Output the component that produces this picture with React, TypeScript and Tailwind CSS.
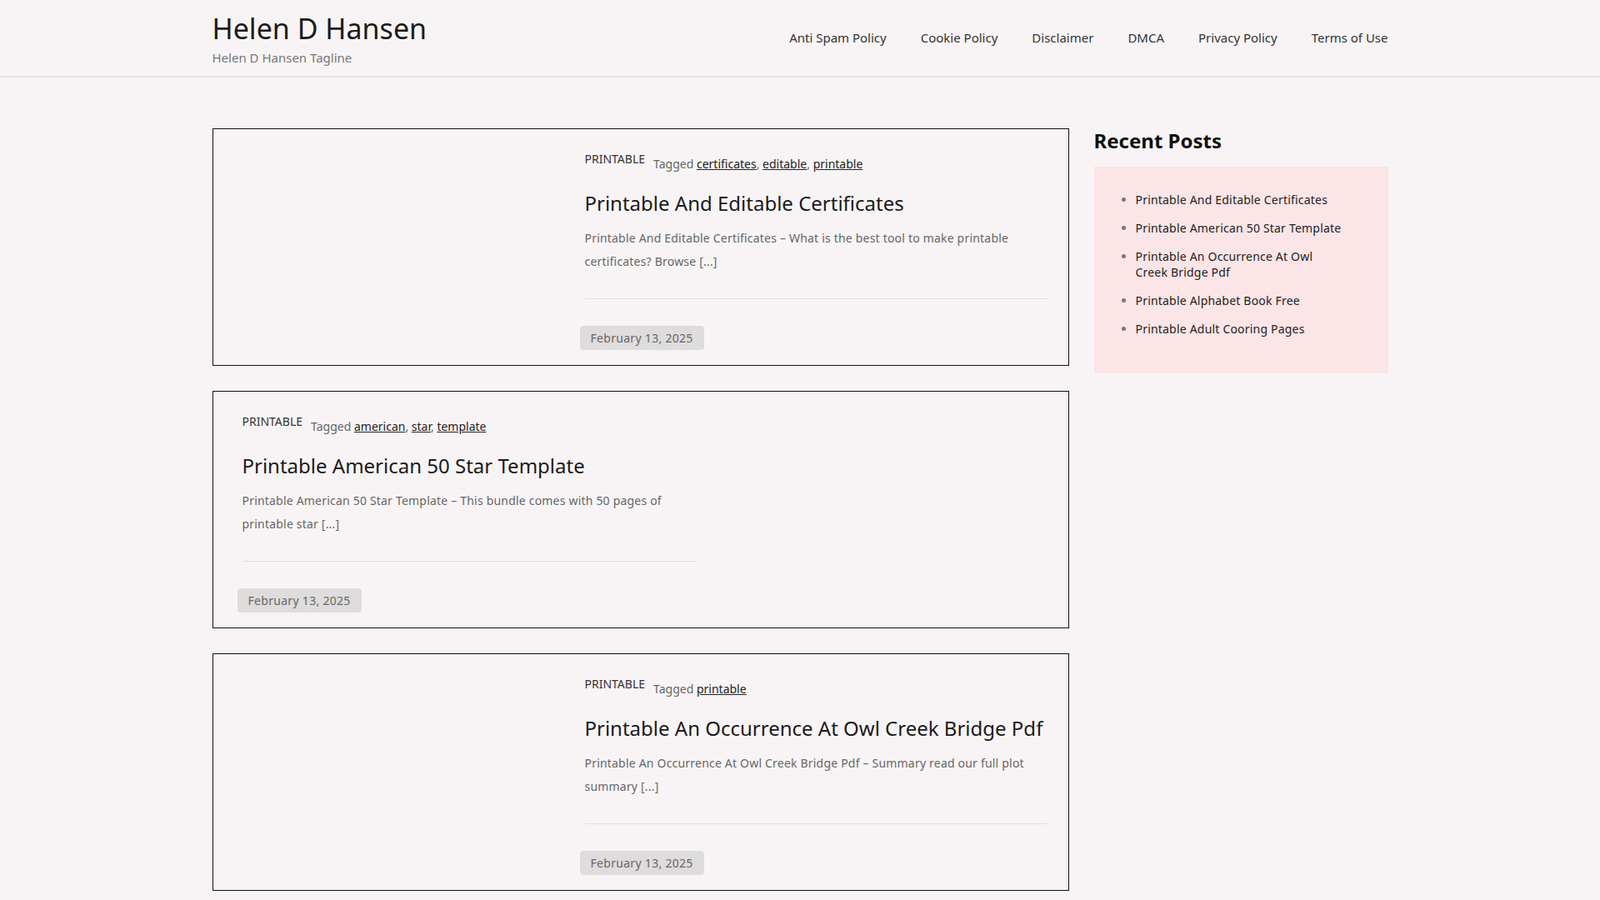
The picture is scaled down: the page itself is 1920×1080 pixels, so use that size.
const posts = [
  {
    title: "Printable And Editable Certificates",
    tags: ["certificates", "editable", "printable"],
    excerpt: "Printable And Editable Certificates – What is the best tool to make printable certificates? Browse [...]",
    imageLeft: true,
  },
  {
    title: "Printable American 50 Star Template",
    tags: ["american", "star", "template"],
    excerpt: "Printable American 50 Star Template – This bundle comes with 50 pages of printable star [...]",
    imageLeft: false,
  },
  {
    title: "Printable An Occurrence At Owl Creek Bridge Pdf",
    tags: ["printable"],
    excerpt: "Printable An Occurrence At Owl Creek Bridge Pdf – Summary read our full plot summary [...]",
    imageLeft: true,
  },
]

const nav = ["Anti Spam Policy", "Cookie Policy", "Disclaimer", "DMCA", "Privacy Policy", "Terms of Use"]

const recent = [
  "Printable And Editable Certificates",
  "Printable American 50 Star Template",
  "Printable An Occurrence At Owl Creek Bridge Pdf",
  "Printable Alphabet Book Free",
  "Printable Adult Cooring Pages",
]

export default function App() {
  return (
    <div className="min-h-screen bg-[#f8f4f5] text-[#222] [font-family:'Liberation_Sans',Arial,sans-serif]">
      {/* Header */}
      <header className="border-b-2 border-[#e6e2e2]">
        <div className="mx-auto max-w-[1411px] flex items-start justify-between h-[91px]">
          <div className="pt-[14px]">
            <div className="text-[34px] leading-[40px] text-[#1b1b1b]">Helen D Hansen</div>
            <div className="text-[15px] text-[#777] mt-[4px]">Helen D Hansen Tagline</div>
          </div>
          <nav className="flex gap-[41px] pt-[34px] text-[15px] text-[#333]">
            {nav.map((n) => (
              <a key={n}>{n}</a>
            ))}
          </nav>
        </div>
      </header>

      <div className="mx-auto max-w-[1411px] flex gap-[30px] pt-[61px]">
        {/* Posts */}
        <main className="w-[1028px] flex flex-col gap-[30px]">
          {posts.map((p) => (
            <article
              key={p.title}
              className={`border border-[#111] h-[285px] flex ${p.imageLeft ? "flex-row" : "flex-row-reverse"}`}
            >
              <div className="w-[446px] shrink-0" />
              <div className={`w-[555px] ${p.imageLeft ? "" : "ml-[35px]"} pt-[25px]`}>
                <div className="flex items-start gap-[10px]">
                  <span className="text-[14px] text-[#333]">PRINTABLE</span>
                  <span className="text-[14px] text-[#666] mt-[6px]">
                    Tagged{" "}
                    {p.tags.map((t, i) => (
                      <span key={t}>
                        <a className="underline text-[#222]">{t}</a>
                        {i < p.tags.length - 1 ? ", " : ""}
                      </span>
                    ))}
                  </span>
                </div>
                <h2 className="text-[24px] text-[#1b1b1b] mt-[22px] leading-[30px]">{p.title}</h2>
                <p className="text-[14px] text-[#666] leading-[28px] mt-[13px] tracking-[0.2px]">{p.excerpt}</p>
                <div className="border-t border-[#e2dede] mt-[30px]" />
                <div className="mt-[32px] -ml-[6px]">
                  <span className="inline-block bg-[#dedcdc] rounded-[4px] px-[13px] py-[4px] text-[14px] text-[#666] tracking-[0.3px]">
                    February 13, 2025
                  </span>
                </div>
              </div>
            </article>
          ))}
          <article className="border border-[#111] h-[285px]" />
        </main>

        {/* Sidebar */}
        <aside className="w-[353px]">
          <h3 className="text-[24px] font-bold text-[#111] leading-[30px]">Recent Posts</h3>
          <div className="bg-[#fbe5e6] mt-[16px] pt-[30px] pb-[44px] pl-[34px] pr-[50px]">
            <ul className="list-disc pl-[16px] text-[14px] text-[#222] flex flex-col gap-[15px] marker:text-[#777] tracking-[0.2px]">
              {recent.map((r) => (
                <li key={r} className="leading-[19px]">{r}</li>
              ))}
            </ul>
          </div>
        </aside>
      </div>
      <div className="h-[40px]" />
    </div>
  )
}
